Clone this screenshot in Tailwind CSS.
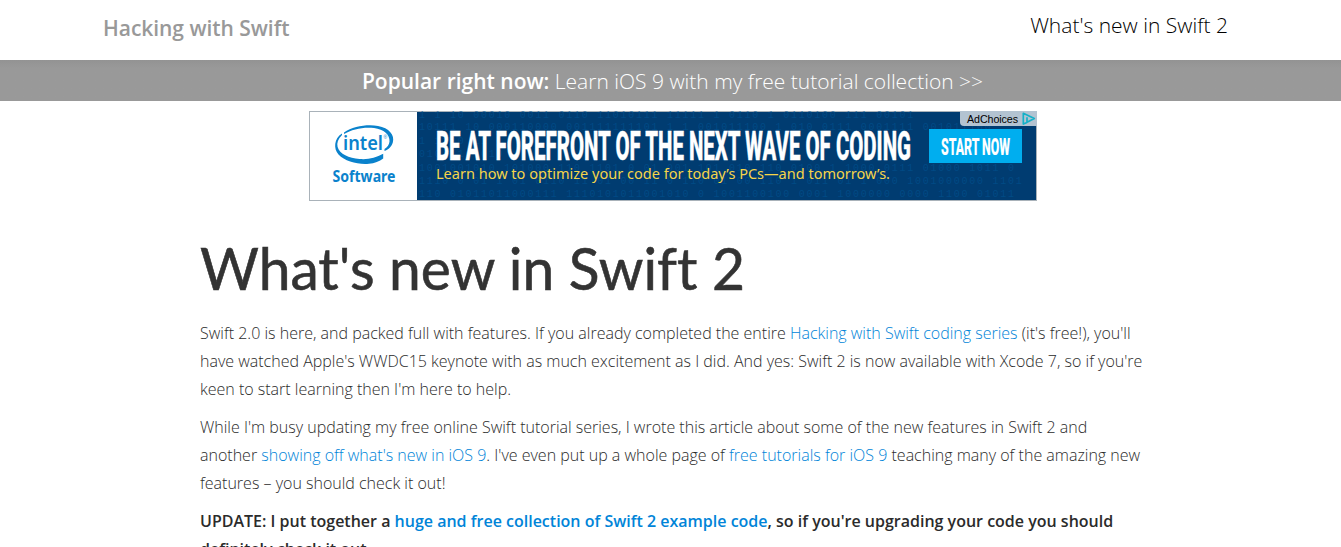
<!DOCTYPE html>
<html lang="en">
  <head>
    <meta charset="UTF-8" />
    <meta name="viewport" content="width=device-width, initial-scale=1.0" />
    <title>What's new in Swift 2</title>
    <script src="https://cdn.jsdelivr.net/npm/@tailwindcss/browser@4"></script>
  </head>
  <body class="bg-white font-['Open_Sans',sans-serif] text-[#2b2b2b] h-screen overflow-hidden">
    <header class="h-[60px] flex justify-between pl-[103px] pr-[113px] whitespace-nowrap">
      <a href="#" class="text-[21px] leading-[56px] font-semibold tracking-[-0.04px] text-[#999]">Hacking with Swift</a>
      <a href="#" class="text-[21px] leading-[51px] font-light text-black">What's new in Swift 2</a>
    </header>

    <a href="#" class="block h-[41px] bg-[#999] bg-linear-to-b from-[#939393] from-0% to-[#999] to-20% pl-1 text-center text-[21px] leading-[43px] font-light text-white whitespace-nowrap">
      <strong class="font-semibold">Popular right now:</strong> Learn iOS 9 with my free tutorial collection &gt;&gt;
    </a>

    <!-- Banner -->
    <div class="w-[728px] h-[90px] mt-[10px] ml-[309px]">
      <svg class="block" width="728" height="90" viewBox="0 0 728 90">
        <rect x="0.5" y="0.5" width="727" height="89" fill="#fff" stroke="#a9b2b9" />
        <rect x="108" y="1" width="619" height="88" fill="#003c71" />
        <g class="whitespace-pre" font-family="Liberation Mono, monospace" font-size="10" letter-spacing="1.75" fill="#005493" opacity="0.6">
          <text x="110" y="7">   1  1 10 00010 0011 0110 11010111   11111 1 0110 1   0110100  111 00101</text>
          <text x="110" y="19">10111 10  000110000 001111111101 1 1  001011100 1 010  0111  0001111 001011100</text>
          <text x="110" y="33">1                                                              1100           11</text>
          <text x="110" y="46">010                                                            110           010</text>
          <text x="110" y="60">1001001010  101000 110 1101 0 01 001 101  010 110 0100 1 1000 0111 01000 1011 0</text>
          <text x="110" y="73">1110 0 01 1 01 0110 11 01  00 11 0 110 01 00 110 1 011 01 1 000 1001000000 1101</text>
          <text x="110" y="86">110  01011011000111 1110101011001010 0  1001100100 0001 1000000 0000 1100 01011</text>
        </g>

        <!-- Intel logo -->
        <g fill="#0a82cc">
          <path d="M35 21.5C44 15.5 58 13 69 15C80 17 86 24 83.8 31.5C82.6 36 79 38.8 75.5 40V38C78.5 36 80.2 33.5 80.5 30.5C81 23.5 75 18.5 65 17C55 15.7 43 18 35 23Z" />
          <path d="M33 22.5C25 27.5 24.3 37.5 29.5 43.5C36 50.5 49 53.8 60 52.8C65.5 52.2 70.5 50.5 74.2 47.5V42.8C67 47 59 48.7 50.5 48C40 47.2 30.5 43 28.6 36C27.6 32 29 28 33 24Z" />
          <text x="34" y="39" font-family="Noto Sans, sans-serif" font-weight="600" font-size="20.5" textLength="40" lengthAdjust="spacingAndGlyphs">intel</text>
          <text x="74.5" y="28" font-family="Liberation Sans, sans-serif" font-size="5">®</text>
          <text x="23.5" y="71" font-family="Noto Sans, sans-serif" font-weight="700" font-size="15.5" textLength="63" lengthAdjust="spacingAndGlyphs">Software</text>
        </g>

        <text transform="translate(127 48.5) scale(1 1.42)" font-family="Roboto, sans-serif" font-weight="800" font-size="28" fill="#fff" stroke="#fff" stroke-width="0.3" textLength="475" lengthAdjust="spacingAndGlyphs">BE AT FOREFRONT OF THE NEXT WAVE OF CODING</text>
        <text x="127" y="67.5" font-family="Noto Sans, sans-serif" font-size="15" fill="#f5d54a" textLength="454" lengthAdjust="spacingAndGlyphs">Learn how to optimize your code for today’s PCs—and tomorrow’s.</text>

        <rect x="620" y="18" width="93" height="34" fill="#00aeef" />
        <text x="632" y="43.5" font-family="Roboto, sans-serif" font-weight="800" font-size="24" fill="#fff" stroke="#fff" stroke-width="0.2" textLength="69" lengthAdjust="spacingAndGlyphs">START NOW</text>

        <!-- AdChoices -->
        <path d="M651 0H728V15H655Q651 15 651 11Z" fill="#b3c3d1" />
        <text x="658" y="11.5" font-family="Liberation Sans, sans-serif" font-size="10.7" fill="#000" textLength="51">AdChoices</text>
        <path d="M718 11.5L714.3 13V2.3L725.3 7.6L718 11.2V6.2" fill="none" stroke="#14b1c8" stroke-width="1.7" stroke-linejoin="round" />
      </svg>
    </div>

    <main class="ml-[200px] w-[960px] whitespace-nowrap">
      <h1 class="mt-[33px] h-[72px]">
        <svg class="block overflow-visible" width="545" height="72">
          <text class="[font-variant-ligatures:none]" x="0" y="56" font-family="Lato, sans-serif" font-size="59" fill="#333" stroke="#333" stroke-width="0.6" textLength="545" lengthAdjust="spacingAndGlyphs">What's new in Swift 2</text>
        </svg>
      </h1>
      <div class="mt-[13px] flex flex-col gap-[10px] text-[16px] leading-[28px] font-light [&_a]:text-[#0084d8]">
        <p>
          Swift 2.0 is here, and packed full with features. If you already completed the entire <a href="#">Hacking with Swift coding series</a> (it's free!), you'll<br />
          have watched Apple's WWDC15 keynote with as much excitement as I did. And yes: Swift 2 is now available with Xcode 7, so if you're<br />
          keen to start learning then I'm here to help.
        </p>
        <p>
          While I'm busy updating my free online Swift tutorial series, I wrote this article about some of the new features in Swift 2 and<br />
          another <a href="#">showing off what's new in iOS 9</a>. I've even put up a whole page of <a href="#">free tutorials for iOS 9</a> teaching many of the amazing new<br />
          features – you should check it out!
        </p>
        <p class="font-semibold">
          UPDATE: I put together a <a href="#">huge and free collection of Swift 2 example code</a>, so if you're upgrading your code you should<br />
          definitely check it out.
        </p>
      </div>
    </main>
  </body>
</html>
